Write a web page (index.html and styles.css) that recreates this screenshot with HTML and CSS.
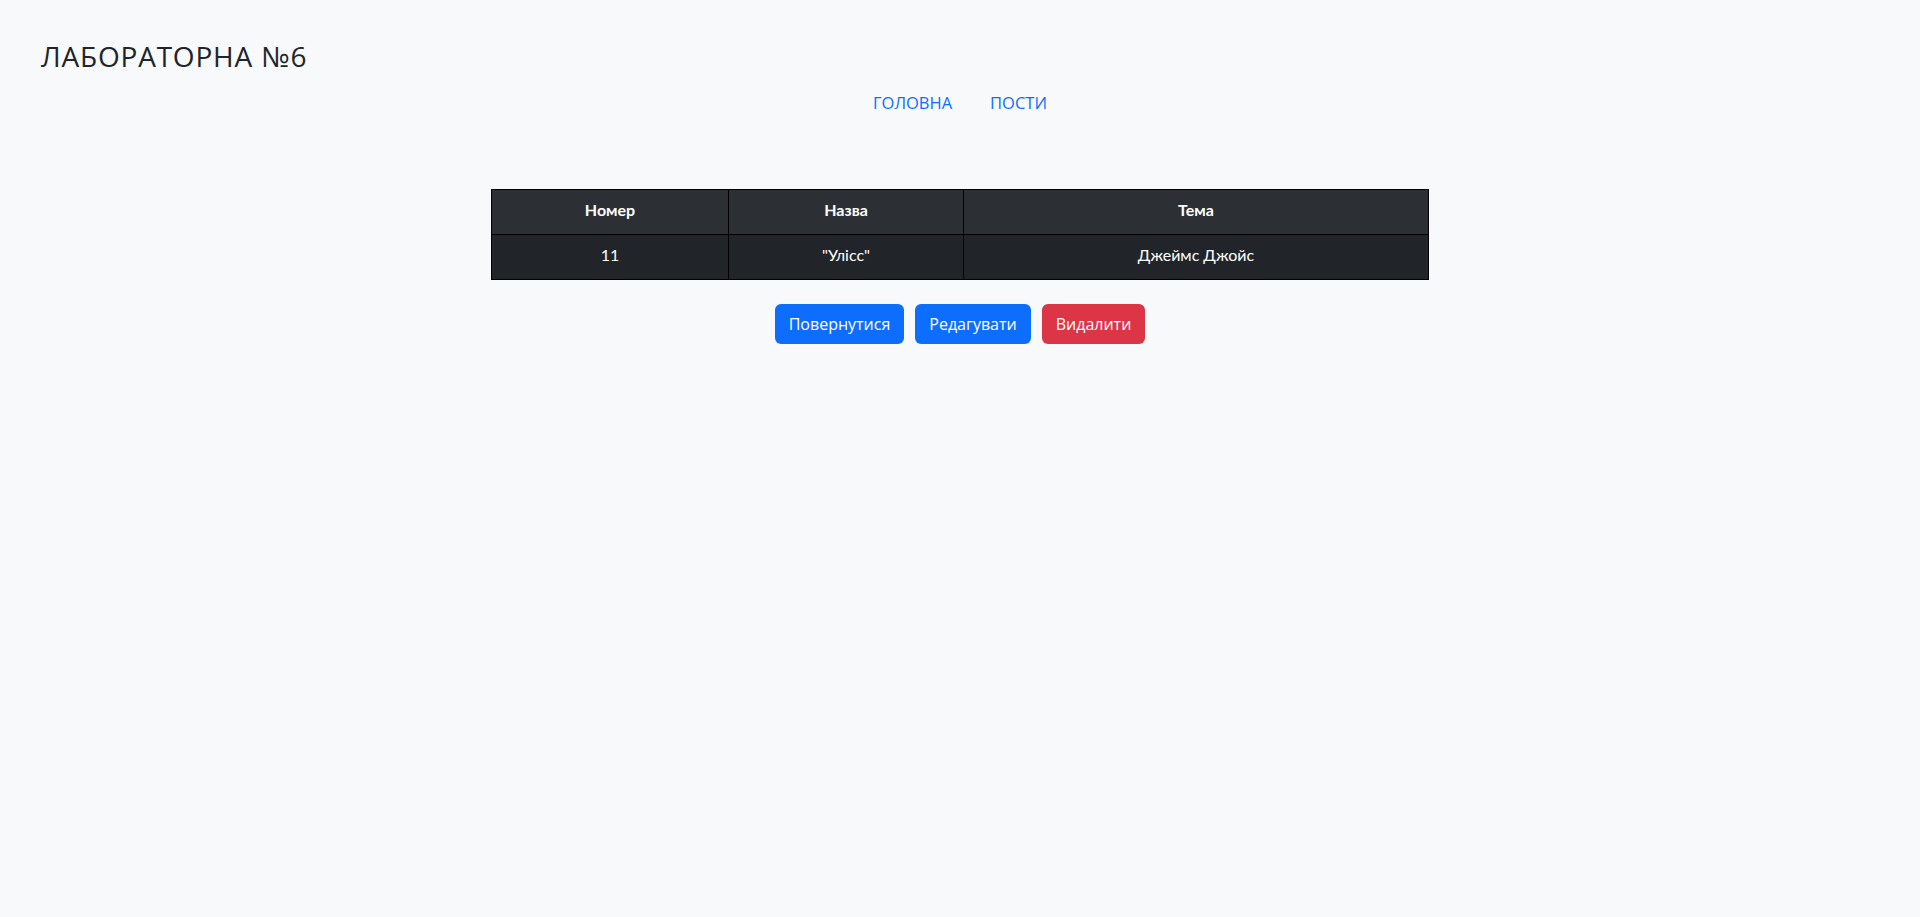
FILE: index.html
```html
<!DOCTYPE html>
<html lang="uk">
<head>
<meta charset="utf-8">
<title>Лабораторна №6</title>
<link rel="stylesheet" href="styles.css">
</head>
<body>
<header class="header">
  <h1 class="title">ЛАБОРАТОРНА №6</h1>
  <nav class="nav">
    <a class="nav-link" href="#">ГОЛОВНА</a>
    <a class="nav-link" href="#">ПОСТИ</a>
  </nav>
</header>
<main class="main">
  <table class="table">
    <colgroup>
      <col class="col-num">
      <col class="col-name">
      <col class="col-topic">
    </colgroup>
    <thead>
      <tr>
        <th>Номер</th>
        <th>Назва</th>
        <th>Тема</th>
      </tr>
    </thead>
    <tbody>
      <tr>
        <td>11</td>
        <td>"Улісс"</td>
        <td>Джеймс Джойс</td>
      </tr>
    </tbody>
  </table>
  <div class="actions">
    <button class="btn btn-primary">Повернутися</button>
    <button class="btn btn-primary">Редагувати</button>
    <button class="btn btn-danger">Видалити</button>
  </div>
</main>
</body>
</html>
```
FILE: styles.css
```css
html, body {
  margin: 0;
  padding: 0;
}
body {
  background: #f8f9fa;
  color: #212529;
  font-family: "Open Sans", "Noto Sans", sans-serif;
  min-height: 917px;
}
.header {
  padding: 39px 41px 0;
}
.title {
  margin: 0;
  font-size: 28px;
  font-weight: 400;
  line-height: 34px;
  letter-spacing: 0.8px;
  color: #212529;
}
.nav {
  display: flex;
  justify-content: center;
  gap: 38px;
  margin-top: 18px;
}
.nav-link {
  color: #0d6efd;
  text-decoration: none;
  font-size: 16.5px;
  line-height: 24px;
}
.main {
  display: flex;
  flex-direction: column;
  align-items: center;
  padding-top: 74px;
}
.table {
  width: 937px;
  table-layout: fixed;
  border-collapse: collapse;
  font-family: "Lato", sans-serif;
  font-size: 16px;
  color: #fff;
}
.table th, .table td {
  border: 1px solid #000;
  text-align: center;
  vertical-align: middle;
  padding: 8px 8px 13px;
  line-height: 23px;
}
.table th {
  background: #2c3034;
  font-weight: 700;
}
.table td {
  background: #212529;
}
.col-num { width: 237px; }
.col-name { width: 235px; }
.col-topic { width: 465px; }
.actions {
  display: flex;
  gap: 11px;
  margin-top: 24px;
}
.btn {
  border: none;
  border-radius: 6px;
  color: #fff;
  font-family: "Open Sans", "Noto Sans", sans-serif;
  font-size: 16px;
  height: 40px;
  padding: 0 14px;
  cursor: pointer;
}
.btn-primary { background: #0d6efd; }
.btn-danger { background: #dc3545; }
```
